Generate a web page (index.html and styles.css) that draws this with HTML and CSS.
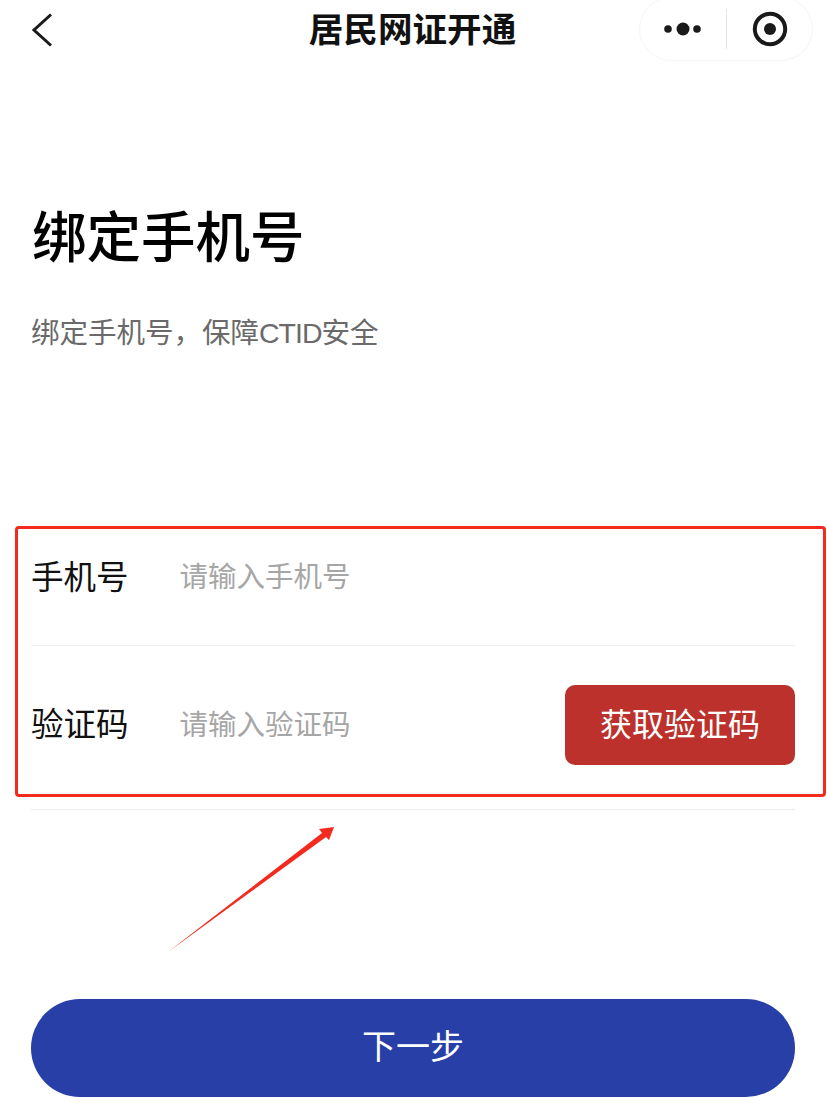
FILE: index.html
```html
<html>
<head>
<meta charset="utf-8">
<link rel="stylesheet" href="styles.css">
</head>
<body>
<div id="wrapper">
	<div class="nav">
		<a href="#" class="back">
			<svg width="24" height="36" viewBox="0 0 24 36"><path d="M21 1.5 L4 17 L21 32.5" fill="none" stroke="#1a1a1a" stroke-width="3"/></svg>
		</a>
		<div class="nav-title">居民网证开通</div>
		<div class="capsule">
			<svg class="more" width="42" height="16" viewBox="0 0 42 16"><circle cx="6" cy="8" r="3.8" fill="#1a1a1a"/><circle cx="21" cy="8" r="6.5" fill="#1a1a1a"/><circle cx="35" cy="8" r="3.8" fill="#1a1a1a"/></svg>
			<span class="capsule-line"></span>
			<svg class="target" width="36" height="36" viewBox="0 0 36 36"><circle cx="18" cy="18" r="15.2" fill="none" stroke="#1a1a1a" stroke-width="4"/><circle cx="18" cy="18" r="6" fill="#1a1a1a"/></svg>
		</div>
	</div>
	<div class="intro">
		<h1>绑定手机号</h1>
		<p>绑定手机号，保障<span class="latin">CTID</span>安全</p>
	</div>
	<form class="form">
		<div class="row">
			<label>手机号</label>
			<span class="placeholder">请输入手机号</span>
		</div>
		<div class="row code">
			<label>验证码</label>
			<span class="placeholder">请输入验证码</span>
			<a href="#" class="get-code">获取验证码</a>
		</div>
		<a href="#" class="next">下一步</a>
	</form>
	<!-- annotation drawn over the screenshot -->
	<div class="mark-box"></div>
	<svg class="mark-arrow" width="180" height="140" viewBox="0 0 180 140"><path d="M8 132 L162 13 L159 9 L174 7 L169 20 L166 17 Z" fill="#f42a1e"/></svg>
</div>
</body>
</html>
```

FILE: styles.css
```css
html,body {
	margin: 0;
	padding: 0;
	width: 100%;
	height: 100%;
	overflow: hidden;
	background: #fff;
	font-family: "Liberation Sans", "Noto Sans CJK SC", sans-serif;
}
#wrapper {
	position: relative;
	height: 100%;
}

.nav {
	display: grid;
	grid-template-columns: 1fr auto 1fr;
	grid-template-rows: 61px;
	align-items: center;
}
.back {
	display: flex;
	margin-left: 30px;
}
.nav-title {
	margin: 0 2px 2px 0;
	font-size: 34.6px;
	font-weight: 700;
	color: #111;
	line-height: 60px;
}
.capsule {
	box-sizing: border-box;
	justify-self: end;
	align-self: end;
	display: flex;
	align-items: center;
	width: 174px;
	height: 64px;
	margin-right: 14px;
	padding: 0 0 0 22px;
	border: 1px solid #f5f5f5;
	border-radius: 32px;
}
.capsule-line {
	width: 1px;
	height: 40px;
	margin: 0 25px 0 22px;
	background: #e6e6e6;
}

.intro {
	padding: 0 31px;
}
.intro h1 {
	margin: 138px 0 0 1px;
	font-size: 54.5px;
	font-weight: 500;
	line-height: 80px;
	color: #000;
}
.intro p {
	margin: 34px 0 0 0;
	font-size: 28.5px;
	line-height: 40px;
	color: #6a6a6a;
}
.latin {
	letter-spacing: -1px;
}

.form {
	margin: 0;
	padding: 0 32px 0 31px;
}
.row {
	display: flex;
	align-items: center;
	box-sizing: content-box;
	height: 134px;
	padding-bottom: 4px;
	margin-top: 154px;
	border-bottom: 1px solid #eee;
}
.row label {
	width: 148.5px;
	font-size: 32.5px;
	color: #111;
}
.placeholder {
	font-size: 28.5px;
	color: #a6a6a6;
}
.row.code {
	height: 124px;
	margin-top: 0;
	padding: 39px 0 0 0;
	align-items: flex-start;
}
.row.code label,
.row.code .placeholder {
	line-height: 80px;
}
.get-code {
	width: 230px;
	height: 80px;
	margin-left: auto;
	background: #bc312c;
	border-radius: 10px;
	color: #fff;
	font-size: 32px;
	line-height: 80px;
	text-align: center;
	text-decoration: none;
}
.next {
	display: block;
	height: 98px;
	margin-top: 189px;
	background: #273fa6;
	border-radius: 49px;
	color: #fff;
	font-size: 34px;
	line-height: 96px;
	text-align: center;
	text-decoration: none;
}

.mark-box {
	position: absolute;
	box-sizing: border-box;
	left: 15px;
	top: 526px;
	width: 811px;
	height: 271px;
	border: 3px solid #f42a1e;
	border-radius: 4px;
}
.mark-arrow {
	position: absolute;
	left: 160px;
	top: 820px;
}
```
